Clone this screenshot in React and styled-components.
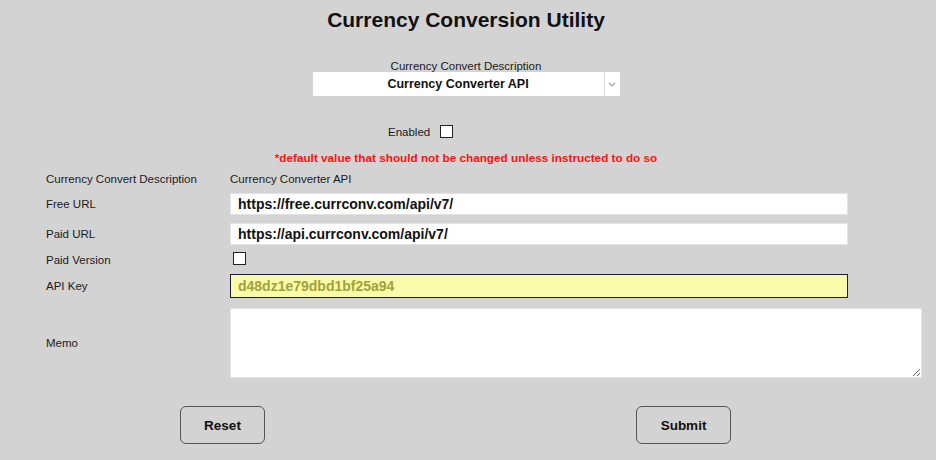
import React from 'react';
import styled, { createGlobalStyle } from 'styled-components';

const GlobalStyle = createGlobalStyle`
  body {
    margin: 0;
    background: #d3d3d3;
    font-family: 'Liberation Sans', Arial, sans-serif;
    color: #1a1a1a;
  }
`;

const StyledPage = styled.div`
  min-height: 460px;
  padding-top: 8px;
  box-sizing: border-box;
`;

const StyledHeader = styled.div`
  display: flex;
  flex-direction: column;
  align-items: center;
  padding-right: 4px;
`;

const StyledTitle = styled.h1`
  margin: 0;
  font-size: 21px;
  line-height: 24px;
  font-weight: bold;
  color: #111;
`;

const StyledTopLabel = styled.div`
  margin-top: 28px;
  font-size: 11.5px;
  line-height: 12px;
`;

const StyledSelectBox = styled.div`
  display: flex;
  width: 307px;
  height: 24px;
  background: #fff;
`;

const StyledSelect = styled.select`
  flex: 1;
  appearance: none;
  border: none;
  outline: none;
  background: transparent;
  font-family: inherit;
  font-size: 12.5px;
  font-weight: bold;
  color: #111;
  text-align: center;
  text-align-last: center;
  padding: 0;
`;

const StyledArrow = styled.div`
  width: 15px;
  display: flex;
  align-items: center;
  justify-content: center;
  border-left: 1px solid #d8d8d8;
`;

const StyledEnabledRow = styled.label`
  display: flex;
  align-items: center;
  gap: 10px;
  margin-top: 29px;
  padding-left: 388px;
  font-size: 11.5px;
`;

const StyledCheck = styled.input.attrs({ type: 'checkbox' })`
  appearance: none;
  margin: 0 0 0 ${(p) => p.$indent || 0}px;
  width: 13px;
  height: 13px;
  border: 1px solid #222;
  background: #fff;
  box-sizing: border-box;
`;

const StyledNote = styled.div`
  margin-top: 13px;
  text-align: center;
  padding-right: 4px;
  font-size: 11.75px;
  line-height: 13px;
  font-weight: bold;
  color: #ff1010;
`;

const StyledForm = styled.div`
  display: grid;
  grid-template-columns: 184px 1fr;
  grid-template-rows: 14px 22px 23px 15px 24px 70px;
  row-gap: 7px;
  align-items: center;
  margin-top: 8px;
  padding: 0 14px 0 46px;
  font-size: 11.5px;
`;

const StyledLabel = styled.div`
  margin-top: ${(p) => p.$shift || 0}px;
`;

const StyledValue = styled.div`
  line-height: 14px;
`;

const StyledInput = styled.input`
  width: 618px;
  height: ${(p) => (p.$key ? 24 : 22)}px;
  box-sizing: border-box;
  border: 1px solid ${(p) => (p.$key ? '#1c1c2c' : '#e2e2e2')};
  background: ${(p) => (p.$key ? '#f8fba9' : '#fff')};
  padding: 0 7px;
  font-family: inherit;
  font-size: 14px;
  font-weight: bold;
  color: ${(p) => (p.$key ? '#a2a23c' : '#111')};
  outline: none;
`;

const StyledMemo = styled.textarea`
  width: 100%;
  height: 70px;
  box-sizing: border-box;
  margin-top: 6px;
  border: 1px solid #e2e2e2;
  background: #fff;
  outline: none;
  display: block;
`;

const StyledButtons = styled.div`
  display: flex;
  gap: 371px;
  margin-top: 31px;
  padding-left: 180px;
`;

const StyledButton = styled.button`
  width: ${(p) => p.$width}px;
  height: 38px;
  border: 1px solid #555;
  border-radius: 6px;
  background: transparent;
  font-family: inherit;
  font-size: 13.5px;
  font-weight: bold;
  color: #111;
  cursor: pointer;
`;

const ChevronDown = () => (
  <svg width="8" height="5" viewBox="0 0 8 5">
    <path d="M1 1 L4 4 L7 1" stroke="#a0a0a0" strokeWidth="1.2" fill="none" />
  </svg>
);

const App = () => (
  <StyledPage>
    <GlobalStyle />
    <StyledHeader>
      <StyledTitle>Currency Conversion Utility</StyledTitle>
      <StyledTopLabel>Currency Convert Description</StyledTopLabel>
      <StyledSelectBox>
        <StyledSelect defaultValue="api">
          <option value="api">Currency Converter API</option>
        </StyledSelect>
        <StyledArrow>
          <ChevronDown />
        </StyledArrow>
      </StyledSelectBox>
    </StyledHeader>
    <StyledEnabledRow>
      Enabled
      <StyledCheck />
    </StyledEnabledRow>
    <StyledNote>*default value that should not be changed unless instructed to do so</StyledNote>
    <StyledForm>
      <StyledLabel>Currency Convert Description</StyledLabel>
      <StyledValue>Currency Converter API</StyledValue>
      <StyledLabel>Free URL</StyledLabel>
      <StyledInput defaultValue="https://free.currconv.com/api/v7/" />
      <StyledLabel>Paid URL</StyledLabel>
      <StyledInput defaultValue="https://api.currconv.com/api/v7/" />
      <StyledLabel>Paid Version</StyledLabel>
      <div>
        <StyledCheck $indent={3} />
      </div>
      <StyledLabel>API Key</StyledLabel>
      <StyledInput $key defaultValue="d48dz1e79dbd1bf25a94" />
      <StyledLabel $shift={6}>Memo</StyledLabel>
      <StyledMemo />
    </StyledForm>
    <StyledButtons>
      <StyledButton $width={85}>Reset</StyledButton>
      <StyledButton $width={95}>Submit</StyledButton>
    </StyledButtons>
  </StyledPage>
);

export default App;
